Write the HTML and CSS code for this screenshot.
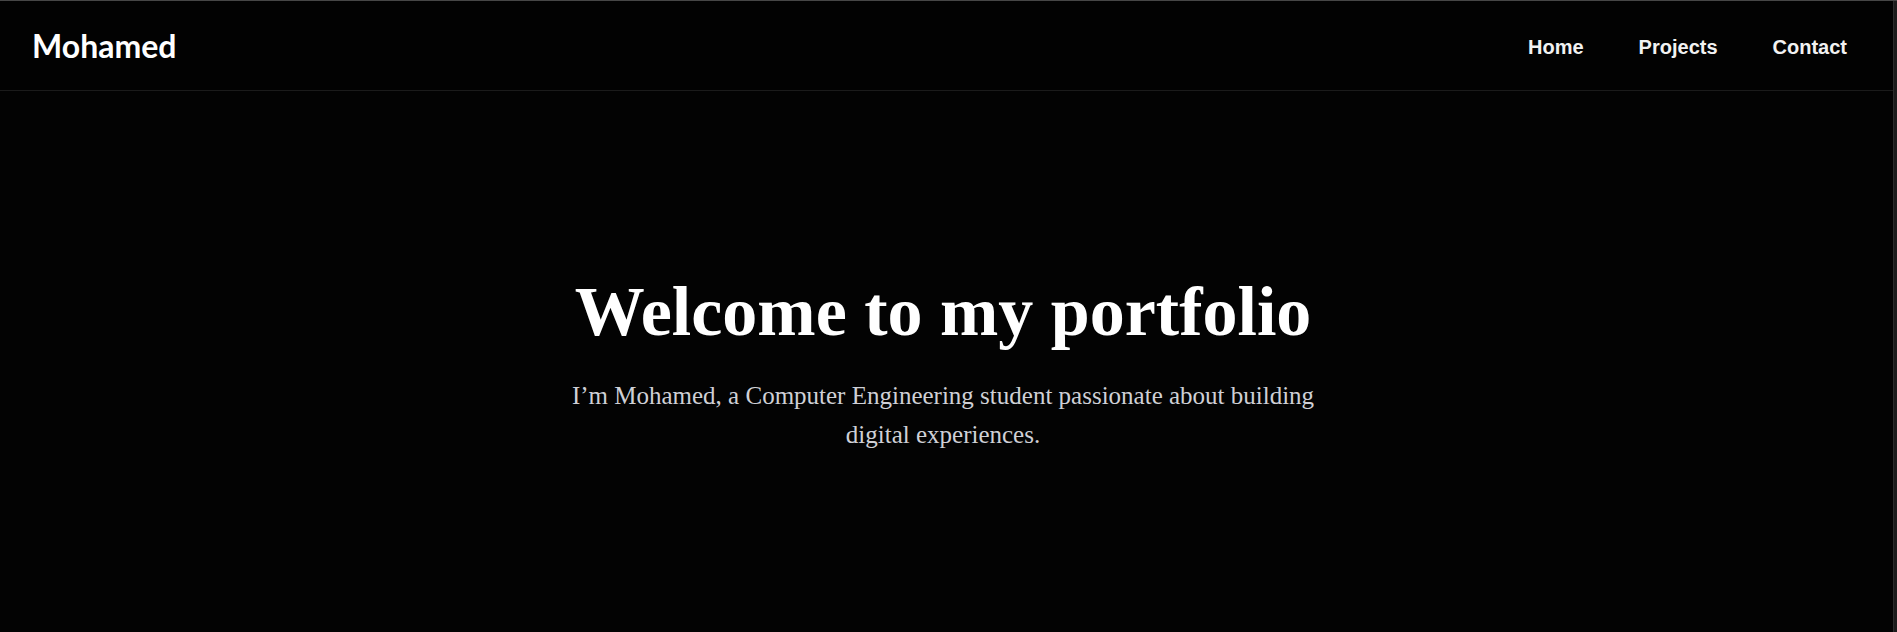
FILE: index.html
```html
<!DOCTYPE html>
<html lang="en">
<head>
<meta charset="utf-8">
<title>Mohamed — Portfolio</title>
<link rel="stylesheet" href="styles.css">
</head>
<body>
<div class="frame">
  <header class="site-header">
    <a class="logo" href="#">Mohamed</a>
    <nav class="nav">
      <a href="#">Home</a>
      <a href="#">Projects</a>
      <a href="#">Contact</a>
    </nav>
  </header>
  <main class="hero">
    <h1 class="hero-title">Welcome to my portfolio</h1>
    <p class="hero-text">I’m Mohamed, a Computer Engineering student passionate about building digital experiences.</p>
  </main>
  <div class="edge"></div>
</div>
</body>
</html>
```

FILE: styles.css
```css
* { box-sizing: border-box; }

html, body {
  margin: 0;
  padding: 0;
  background: #000;
  height: 632px;
  overflow: hidden;
}

.frame {
  position: relative;
  height: 632px;
  border-top: 1px solid #464646;
  background: #040404;
}

.site-header {
  height: 90px;
  display: flex;
  align-items: center;
  justify-content: space-between;
  padding: 0 50px 0 32px;
  background: #020202;
  border-bottom: 1px solid #1b1b1b;
}

.logo {
  font-family: Lato, "Open Sans", sans-serif;
  font-weight: 700;
  font-size: 32px;
  line-height: 38px;
  color: #fff;
  text-decoration: none;
}

.nav {
  display: flex;
  gap: 55px;
  padding-top: 3px;
}

.nav a {
  font-family: "Liberation Sans", Arial, sans-serif;
  font-weight: 700;
  font-size: 20px;
  line-height: 23px;
  color: #f2f2f2;
  text-decoration: none;
}

.hero {
  height: 541px;
  display: flex;
  flex-direction: column;
  align-items: center;
  justify-content: center;
  text-align: center;
  padding-right: 11px;
  background: #030303;
}

.hero-title {
  margin: 0 0 22px;
  font-family: "Liberation Serif", "Times New Roman", serif;
  font-weight: 700;
  font-size: 70px;
  line-height: 84px;
  color: #fff;
}

.hero-text {
  margin: 0;
  max-width: 760px;
  font-family: "Liberation Serif", "Times New Roman", serif;
  font-size: 25px;
  line-height: 39px;
  color: #cfd0d6;
}

.edge {
  position: absolute;
  top: 0;
  right: 0;
  width: 4px;
  height: 100%;
  background: #1c1c1c;
  border-left: 1px solid #2c2c2c;
}
```
